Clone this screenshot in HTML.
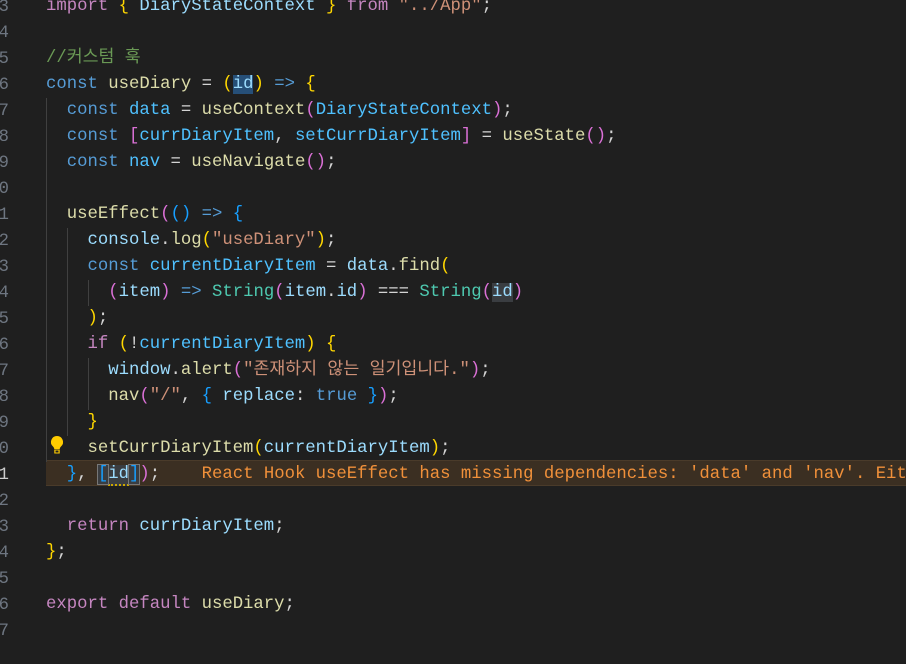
<!DOCTYPE html>
<html><head><meta charset="utf-8"><style>
html,body{margin:0;padding:0;background:#1f1f1f;width:906px;height:664px;overflow:hidden}
.ed{position:relative;width:906px;height:664px;font-family:"Liberation Mono","Noto Sans CJK KR",monospace;font-size:17.3px}
.ln{position:absolute;left:0;width:9px;text-align:right;color:#6e7681;font-size:17.2px;height:26px;line-height:26px;overflow:hidden;direction:rtl;margin-top:3px}
.l{position:absolute;left:46px;height:26px;line-height:26px;white-space:pre;color:#d4d4d4;margin-top:2px}
.g{position:absolute;width:1px;background:#404040;margin-top:2px}
.k{color:#569cd6}.c{color:#c586c0}.v{color:#9cdcfe}.f{color:#dcdcaa}.s{color:#ce9178}.t{color:#4ec9b0}.cm{color:#6a9955}.w{color:#4fc1ff}
.b1{color:#ffd700}.b2{color:#da70d6}.b3{color:#179fff}
.hl{background:#264f78}.hs{background:#3a3d41}
.warn{color:#f0903a}
</style></head><body><div class="ed">
<div style="position:absolute;left:46px;right:0;top:460px;height:26px;background:#3b2f22;border-top:1px solid #4a3b2a;border-bottom:1px solid #4a3b2a;box-sizing:border-box"></div>
<div class="g" style="left:46px;top:96px;height:364px"></div>
<div class="g" style="left:67px;top:226px;height:208px"></div>
<div class="g" style="left:88px;top:278px;height:26px"></div>
<div class="g" style="left:88px;top:356px;height:52px"></div>
<div class="ln" style="top:-8px">3</div>
<div class="ln" style="top:18px">4</div>
<div class="ln" style="top:44px">5</div>
<div class="ln" style="top:70px">6</div>
<div class="ln" style="top:96px">7</div>
<div class="ln" style="top:122px">8</div>
<div class="ln" style="top:148px">9</div>
<div class="ln" style="top:174px">0</div>
<div class="ln" style="top:200px">1</div>
<div class="ln" style="top:226px">2</div>
<div class="ln" style="top:252px">3</div>
<div class="ln" style="top:278px">4</div>
<div class="ln" style="top:304px">5</div>
<div class="ln" style="top:330px">6</div>
<div class="ln" style="top:356px">7</div>
<div class="ln" style="top:382px">8</div>
<div class="ln" style="top:408px">9</div>
<div class="ln" style="top:434px">0</div>
<div class="ln" style="top:460px;color:#cccccc">1</div>
<div class="ln" style="top:486px">2</div>
<div class="ln" style="top:512px">3</div>
<div class="ln" style="top:538px">4</div>
<div class="ln" style="top:564px">5</div>
<div class="ln" style="top:590px">6</div>
<div class="ln" style="top:616px">7</div>

<div class="l" style="top:-8px"><span class="c">import</span> <span class="b1">{</span> <span class="v">DiaryStateContext</span> <span class="b1">}</span> <span class="c">from</span> <span class="s">"../App"</span>;</div>
<div class="l" style="top:44px"><span class="cm">//커스텀 훅</span></div>
<div class="l" style="top:70px"><span class="k">const</span> <span class="f">useDiary</span> = <span class="b1">(</span><span class="v hl">id</span><span class="b1">)</span> <span class="k">=&gt;</span> <span class="b1">{</span></div>
<div class="l" style="top:96px">  <span class="k">const</span> <span class="w">data</span> = <span class="f">useContext</span><span class="b2">(</span><span class="w">DiaryStateContext</span><span class="b2">)</span>;</div>
<div class="l" style="top:122px">  <span class="k">const</span> <span class="b2">[</span><span class="w">currDiaryItem</span>, <span class="w">setCurrDiaryItem</span><span class="b2">]</span> = <span class="f">useState</span><span class="b2">()</span>;</div>
<div class="l" style="top:148px">  <span class="k">const</span> <span class="w">nav</span> = <span class="f">useNavigate</span><span class="b2">()</span>;</div>
<div class="l" style="top:200px">  <span class="f">useEffect</span><span class="b2">(</span><span class="b3">()</span> <span class="k">=&gt;</span> <span class="b3">{</span></div>
<div class="l" style="top:226px">    <span class="v">console</span>.<span class="f">log</span><span class="b1">(</span><span class="s">"useDiary"</span><span class="b1">)</span>;</div>
<div class="l" style="top:252px">    <span class="k">const</span> <span class="w">currentDiaryItem</span> = <span class="v">data</span>.<span class="f">find</span><span class="b1">(</span></div>
<div class="l" style="top:278px">      <span class="b2">(</span><span class="v">item</span><span class="b2">)</span> <span class="k">=&gt;</span> <span class="t">String</span><span class="b2">(</span><span class="v">item</span>.<span class="v">id</span><span class="b2">)</span> === <span class="t">String</span><span class="b2">(</span><span class="v hs">id</span><span class="b2">)</span></div>
<div class="l" style="top:304px">    <span class="b1">)</span>;</div>
<div class="l" style="top:330px">    <span class="c">if</span> <span class="b1">(</span>!<span class="w">currentDiaryItem</span><span class="b1">)</span> <span class="b1">{</span></div>
<div class="l" style="top:356px">      <span class="v">window</span>.<span class="f">alert</span><span class="b2">(</span><span class="s">"존재하지 않는 일기입니다."</span><span class="b2">)</span>;</div>
<div class="l" style="top:382px">      <span class="f">nav</span><span class="b2">(</span><span class="s">"/"</span>, <span class="b3">{</span> <span class="v">replace</span>: <span class="k">true</span> <span class="b3">}</span><span class="b2">)</span>;</div>
<div class="l" style="top:408px">    <span class="b1">}</span></div>
<div class="l" style="top:434px">    <span class="f">setCurrDiaryItem</span><span class="b1">(</span><span class="v">currentDiaryItem</span><span class="b1">)</span>;</div>
<div class="l" style="top:460px">  <span class="b3">}</span>, <span class="b3" style="background:#3a3d41;outline:1px solid #777">[</span><span class="v" style="background:#3a3d41;border-bottom:2px dotted #cca700">id</span><span class="b3" style="background:#3a3d41;outline:1px solid #777">]</span><span class="b2">)</span>;    <span class="warn">React Hook useEffect has missing dependencies: 'data' and 'nav'. Either</span></div>
<div class="l" style="top:512px">  <span class="c">return</span> <span class="v">currDiaryItem</span>;</div>
<div class="l" style="top:538px"><span class="b1">}</span>;</div>
<div class="l" style="top:590px"><span class="c">export</span> <span class="c">default</span> <span class="f">useDiary</span>;</div>

<svg style="position:absolute;left:49px;top:434px" width="16" height="22" viewBox="0 0 16 22"><path d="M8 2a6 6 0 0 0-4 10.5c1 1 1.3 2 1.3 3h5.4c0-1 .3-2 1.3-3A6 6 0 0 0 8 2z" fill="#ffcc00"/><rect x="5.3" y="16" width="5.4" height="3.5" fill="#ffcc00"/><rect x="6.5" y="16.5" width="3" height="2" fill="#1f1f1f"/></svg>
</div></body></html>
